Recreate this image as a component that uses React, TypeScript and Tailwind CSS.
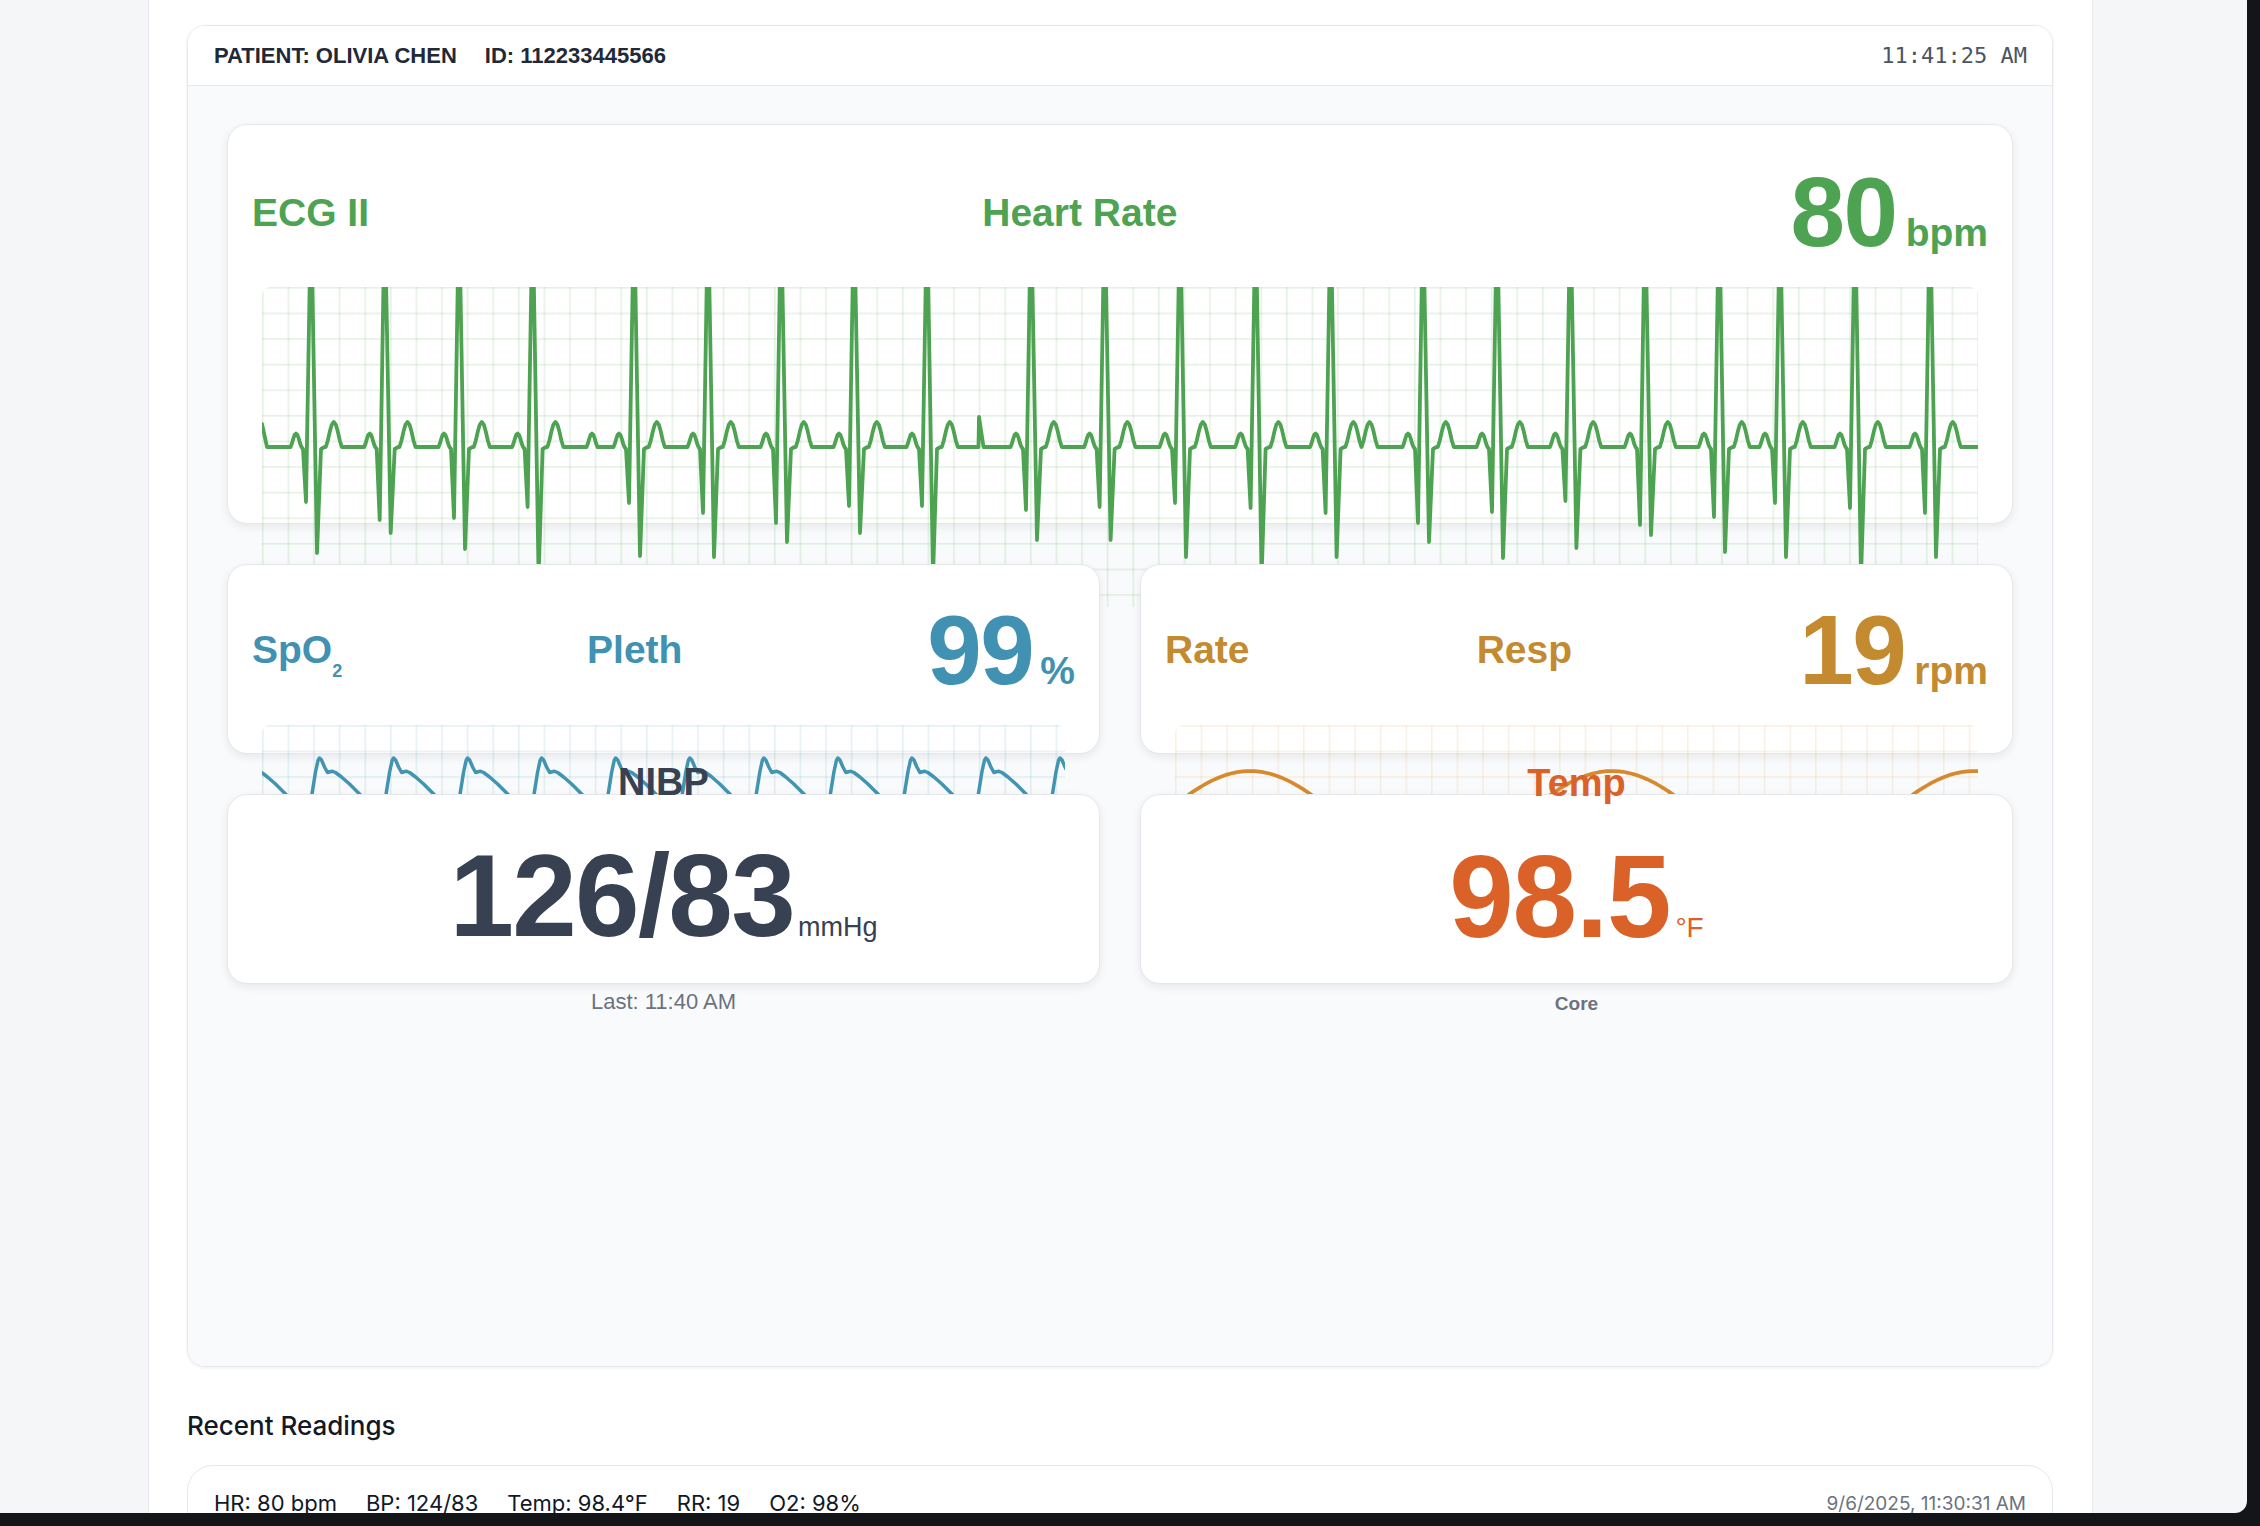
import type { ReactNode } from 'react';

type Pt = [number, number];
type Beat = [number, number, number];

// ---- waveform data (page-space x, offsets in px from baseline) ----

const ECG_X0 = 263;
const ECG_BASE = 160;

// R-peak x, Q depth, S depth
const BEATS: Beat[] = [
  [312, 55, 106], [385.7, 73, 86], [460, 71, 102], [533.6, 60, 130],
  [635, 56, 109], [709, 66, 110], [782, 76, 95], [855, 59, 86], [928, 59, 130],
  [1032, 63, 93], [1105.6, 60, 93], [1181, 56, 110], [1256.6, 61, 130],
  [1331.6, 66, 110], [1424, 76, 95], [1498, 65, 111], [1571.4, 54, 101],
  [1646, 78, 88], [1720, 70, 105], [1781, 56, 110], [1856, 61, 130], [1931, 66, 110],
];

function bump(c: number, w: number, h: number): Pt[] {
  const out: Pt[] = [];
  for (let i = -4; i <= 4; i++) {
    const t = i / 4;
    out.push([c + t * w, -h * Math.pow(Math.cos((t * Math.PI) / 2), 1.4)]);
  }
  return out;
}

function beat(r: number, q: number, s: number): Pt[] {
  return [
    ...bump(r - 15, 5.5, 13.5),
    [r - 8, 2],
    [r - 5, q],
    [r, -240],
    [r + 6, s],
    [r + 10, 2],
    [r + 13.5, 0],
    ...bump(r + 22.8, 8, 25),
  ];
}

function ecgPoints(): string {
  const pts: Pt[] = [[263, -23], [268, 0]];
  for (const [r, q, s] of BEATS) pts.push(...beat(r, q, s));
  pts.push(...bump(593, 5.5, 13.5));
  pts.push([979.5, 0], [980, -30], [984.5, 0]);
  pts.push(...bump(1370.6, 8, 25));
  pts.push([1979, 0]);
  pts.sort((a, b) => a[0] - b[0]);
  return pts.map(([x, y]) => `${(x - ECG_X0).toFixed(1)},${(y + ECG_BASE).toFixed(1)}`).join(' ');
}

const PLETH_SHAPE: Pt[] = [
  [-12, 88], [-8, 72], [-4, 47], [-1.5, 35.5], [0, 33], [2, 35], [5, 42], [8, 47.5],
  [10.5, 46.8], [13, 46.3], [16, 47.5], [22, 52], [30, 59], [40, 69], [50, 80], [57, 86], [62, 88],
];

function plethPoints(): string {
  const pts: Pt[] = [];
  for (let k = -1; k <= 10; k++) {
    const pc = 57.5 + 74.05 * k;
    for (const [t, y] of PLETH_SHAPE) pts.push([pc + t, y]);
  }
  pts.sort((a, b) => a[0] - b[0]);
  return pts.map(([x, y]) => `${x.toFixed(1)},${y.toFixed(1)}`).join(' ');
}

function respPoints(): string {
  const pts: string[] = [];
  for (let x = 0; x <= 806; x += 4) {
    const y = 92 - 46 * Math.cos((2 * Math.PI * (x - 75)) / 362);
    pts.push(`${x},${y.toFixed(1)}`);
  }
  return pts.join(' ');
}

const ECG_PTS = ecgPoints();
const PLETH_PTS = plethPoints();
const RESP_PTS = respPoints();

function Trace({
  id,
  width,
  height,
  grid,
  color,
  points,
  stroke = 3.2,
}: {
  id: string;
  width: number;
  height: number;
  grid: string;
  color: string;
  points: string;
  stroke?: number;
}) {
  return (
    <svg width={width} height={height} viewBox={`0 0 ${width} ${height}`} className="block">
      <defs>
        <pattern id={id} width="25.6" height="25.6" patternUnits="userSpaceOnUse">
          <rect x="0" y="0" width="1.6" height="25.6" fill={grid} />
          <rect x="0" y="0" width="25.6" height="1.6" fill={grid} />
        </pattern>
      </defs>
      <rect width={width} height={height} fill={`url(#${id})`} />
      <polyline
        points={points}
        fill="none"
        stroke={color}
        strokeWidth={stroke}
        strokeLinejoin="round"
        strokeLinecap="round"
      />
    </svg>
  );
}

function Card({ className, children }: { className: string; children: ReactNode }) {
  return (
    <div
      className={`relative rounded-[20px] border border-[#e5e7eb] bg-white shadow-[0_3px_8px_rgba(15,23,42,0.08)] ${className}`}
    >
      {children}
    </div>
  );
}

function Reading({ value, unit, unitClass }: { value: string; unit: string; unitClass: string }) {
  return (
    <div className="flex items-baseline leading-none">
      <span className="text-[98px] font-bold leading-none tracking-[-0.015em]">{value}</span>
      <span className={`font-bold leading-none ${unitClass}`}>{unit}</span>
    </div>
  );
}

function MonitorPanel() {
  return (
    <section className="w-[1866px] overflow-hidden rounded-[18px] border border-[#e5e7eb] shadow-[0_1px_3px_rgba(15,23,42,0.08)]">
      <header className="flex h-[60px] items-center justify-between border-b border-[#e5e7eb] bg-white pl-[26px] pr-[25px]">
        <div className="flex items-center gap-[28px] text-[22px] font-bold text-[#1f2937]">
          <span>PATIENT: OLIVIA CHEN</span>
          <span>ID: 112233445566</span>
        </div>
        <span className="font-['DejaVu_Sans_Mono',monospace] text-[22px] text-[#4b5563]">11:41:25 AM</span>
      </header>

      <div className="flex h-[1280px] flex-col gap-[40px] bg-[#f9fafb] px-[39px] pt-[38px]">
        {/* ECG */}
        <Card className="h-[400px] shrink-0 px-[24px] pt-[26px]">
          <div className="flex h-[122px] items-center justify-between text-[#4ea352]">
            <span className="text-[39px] font-bold leading-none">ECG II</span>
            <span className="text-[39px] font-bold leading-none">Heart Rate</span>
            <Reading value="80" unit="bpm" unitClass="ml-[9px] text-[39px]" />
          </div>
          <div className="mx-[10px] mt-[14px] h-[320px] overflow-hidden rounded-[8px]">
            <Trace id="grid-ecg" width={1716} height={320} grid="rgba(78,163,82,0.15)" color="#4ea352" points={ECG_PTS} stroke={3.8} />
          </div>
        </Card>

        {/* SpO2 / Resp */}
        <div className="grid shrink-0 grid-cols-2 gap-[40px]">
          <Card className="h-[190px] px-[24px] pt-[26px]">
            <div className="flex h-[117px] items-center justify-between text-[#4191b2]">
              <span className="text-[39px] font-bold leading-none">
                SpO<span className="relative top-[14px] text-[18px]">2</span>
              </span>
              <span className="text-[39px] font-bold leading-none">Pleth</span>
              <Reading value="99" unit="%" unitClass="ml-[7px] text-[39px]" />
            </div>
            <div className="mx-[10px] mt-[17px] h-[160px] overflow-hidden rounded-[8px]">
              <Trace id="grid-pleth" width={803} height={160} grid="rgba(65,145,178,0.13)" color="#4294b3" points={PLETH_PTS} stroke={3.5} />
            </div>
          </Card>
          <Card className="h-[190px] px-[24px] pt-[26px]">
            <div className="flex h-[117px] items-center justify-between text-[#c48a2f]">
              <span className="text-[39px] font-bold leading-none">Rate</span>
              <span className="text-[39px] font-bold leading-none">Resp</span>
              <Reading value="19" unit="rpm" unitClass="ml-[9px] text-[39px]" />
            </div>
            <div className="mx-[10px] mt-[17px] h-[160px] overflow-hidden rounded-[8px]">
              <Trace id="grid-resp" width={803} height={160} grid="rgba(214,137,46,0.12)" color="#d6892e" points={RESP_PTS} stroke={3.7} />
            </div>
          </Card>
        </div>

        {/* NIBP / Temp */}
        <div className="grid shrink-0 grid-cols-2 gap-[40px]">
          <Card className="flex h-[190px] flex-col items-center justify-center pb-[2px] text-[#374151]">
            <span className="text-[38px] font-bold leading-none">NIBP</span>
            <div className="mt-[37px] flex items-baseline leading-none">
              <span className="text-[116px] font-bold leading-none tracking-[-0.015em]">126/83</span>
              <span className="ml-[4px] text-[27px] leading-none">mmHg</span>
            </div>
            <span className="mt-[37px] text-[22px] leading-none text-[#6b7280]">Last: 11:40 AM</span>
          </Card>
          <Card className="flex h-[190px] flex-col items-center justify-center pb-[2px] text-[#da6229]">
            <span className="text-[38px] font-bold leading-none">Temp</span>
            <div className="mt-[37px] flex items-baseline leading-none">
              <span className="text-[116px] font-bold leading-none tracking-[-0.01em]">98.5</span>
              <span className="ml-[5px] text-[28px] leading-none">°F</span>
            </div>
            <span className="mt-[39px] text-[19px] font-semibold leading-none text-[#6b7280]">Core</span>
          </Card>
        </div>
      </div>
    </section>
  );
}

function RecentReadings() {
  return (
    <section className="font-['Inter',sans-serif]">
      <h2 className="mt-[41px] text-[26px] font-medium leading-[36px] text-[#111827]">Recent Readings</h2>
      <div className="mt-[21px] flex w-[1866px] items-center justify-between rounded-[26px] border border-[#e5e7eb] bg-white px-[26px] pb-[20px] pt-[21px]">
        <div className="flex gap-[29px] text-[22px] leading-[33px] text-[#111827]">
          <span>HR: 80 bpm</span>
          <span>BP: 124/83</span>
          <span>Temp: 98.4°F</span>
          <span>RR: 19</span>
          <span>O2: 98%</span>
        </div>
        <span className="text-[19px] leading-[33px] text-[#6b7280]">9/6/2025, 11:30:31 AM</span>
      </div>
    </section>
  );
}

export default function App() {
  return (
    <div className="h-[1526px] w-[2260px] overflow-hidden bg-[#141518] font-['Liberation_Sans',Arial,sans-serif]">
      <div className="flex h-[1513px] w-[2247px] overflow-hidden rounded-br-[12px] bg-[#f5f6f8]">
        <div className="w-[148px] shrink-0" />
        <main className="w-[1945px] shrink-0 border-x border-[#e5e7eb] bg-white pl-[38px] pr-[39px] pt-[25px]">
          <MonitorPanel />
          <RecentReadings />
        </main>
      </div>
    </div>
  );
}
